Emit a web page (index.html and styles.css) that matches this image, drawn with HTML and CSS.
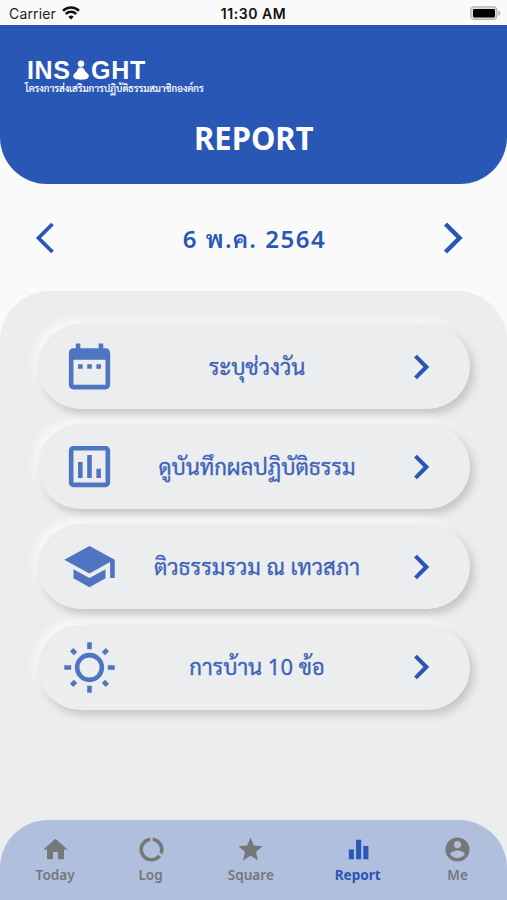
FILE: index.html
```html
<!DOCTYPE html>
<html lang="th">
<head>
<meta charset="utf-8">
<title>Report</title>
<link rel="stylesheet" href="styles.css">
</head>
<body>
<div class="app">
  <div class="status">
    <div class="carrier"><span>Carrier</span>
      <svg class="wifi" viewBox="0 0 18 14"><path d="M9 13.6 6.3 10.7a3.9 3.9 0 0 1 5.4 0z" fill="#111"/><path d="M3.8 8a7.4 7.4 0 0 1 10.4 0M1 4.9a11.4 11.4 0 0 1 16 0" fill="none" stroke="#111" stroke-width="2.5"/></svg>
    </div>
    <div class="clock">11:30 AM</div>
    <svg class="battery" viewBox="0 0 31 14"><rect x=".8" y=".8" width="26" height="12.6" rx="3.5" fill="#ddd" stroke="#b5b5b5" stroke-width="1.3"/><rect x="3" y="3" width="22" height="8.4" rx="1.3"/><path d="M28.3 4.4q2.2.8 2.2 2.7t-2.2 2.7z" fill="#b5b5b5"/></svg>
  </div>
  <header class="header">
    <div class="logo"><span class="logo-a">INS</span><svg class="figure" viewBox="0 0 16 20"><circle cx="8" cy="3.800" r="3.200"/><path d="M8 7.600c2.600 0 3.400 1.600 4.200 3.600l2.800 2.800c1.500 1.700.8 4-1 4.800-2.800 1.200-9.200 1.200-12 0-1.800-.8-2.500-3.100-1-4.800l2.800-2.800c.8-2 1.600-3.600 4.200-3.600z"/></svg><span class="logo-b">GHT</span></div>
    <div class="tagline"><span>โครงการส่งเสริมการปฏิบัติธรรมสมาชิกองค์กร</span></div>
    <h1 class="title"><span>REPORT</span></h1>
  </header>
  <div class="dates">
    <svg class="arrow" viewBox="0 0 20 32"><path d="M17.500 2 3.500 16l14 14" stroke-width="3.700"/></svg>
    <div class="date"><span>6 พ.ค. 2564</span></div>
    <svg class="arrow" viewBox="0 0 20 32"><path d="m2.500 2 14 14-14 14" stroke-width="4.500"/></svg>
  </div>
  <main class="panel">
    <div class="card">
      <svg class="icon" viewBox="0 0 24 24"><path d="M9 11H7v2h2v-2zm4 0h-2v2h2v-2zm4 0h-2v2h2v-2zm2-7h-1V2h-2v2H8V2H6v2H5c-1.110 0-1.990.9-1.990 2L3 20c0 1.100.89 2 2 2h14c1.100 0 2-.9 2-2V6c0-1.100-.9-2-2-2zm0 16H5V9h14v11z"/></svg>
      <div class="label"><span>ระบุช่วงวัน</span></div>
      <svg class="go" viewBox="0 0 16 26"><path d="m2.500 2.200 10.800 10.800L2.500 23.800"/></svg>
    </div>
    <div class="card">
      <svg class="icon" viewBox="0 0 24 24"><path d="M9 17H7v-7h2v7zm4 0h-2V7h2v10zm4 0h-2v-4h2v4zm2 2H5V5h14v14zm0-16H5c-1.100 0-2 .9-2 2v14c0 1.100.9 2 2 2h14c1.100 0 2-.9 2-2V5c0-1.100-.9-2-2-2z"/></svg>
      <div class="label"><span>ดูบันทึกผลปฏิบัติธรรม</span></div>
      <svg class="go" viewBox="0 0 16 26"><path d="m2.500 2.200 10.800 10.800L2.500 23.800"/></svg>
    </div>
    <div class="card">
      <svg class="icon" viewBox="0 0 24 24"><path d="M5 13.180v4L12 21l7-3.820v-4L12 17l-7-3.820zM12 3 1 9l11 6 9-4.910V17h2V9L12 3z"/></svg>
      <div class="label"><span>ติวธรรมรวม ณ เทวสภา</span></div>
      <svg class="go" viewBox="0 0 16 26"><path d="m2.500 2.200 10.800 10.800L2.500 23.800"/></svg>
    </div>
    <div class="card">
      <svg class="icon sun" viewBox="0 0 24 24"><circle cx="12" cy="12" r="5.400"/><path d="M12 1v3M12 20v3M1 12h3M20 12h3M4.200 4.200l1.700 1.700M18.100 18.100l1.700 1.700M4.200 19.800l1.700-1.700M18.100 5.900l1.700-1.700"/></svg>
      <div class="label"><span>การบ้าน 10 ข้อ</span></div>
      <svg class="go" viewBox="0 0 16 26"><path d="m2.500 2.200 10.800 10.800L2.500 23.800"/></svg>
    </div>
  </main>
  <nav class="tabs">
    <div class="tab"><svg viewBox="0 0 24 24"><path d="M10 20v-6h4v6h5v-8h3L12 3 2 12h3v8z"/></svg><span>Today</span></div>
    <div class="tab"><svg viewBox="0 0 24 24"><path d="M13 2.050v3.030c3.390.490 6 3.390 6 6.920 0 .9-.180 1.750-.480 2.540l2.600 1.530c.560-1.240.880-2.620.880-4.070 0-5.180-3.950-9.450-9-9.950zM12 19c-3.870 0-7-3.130-7-7 0-3.530 2.610-6.430 6-6.920V2.050c-5.060.5-9 4.760-9 9.950 0 5.520 4.470 10 9.990 10 3.310 0 6.240-1.610 8.060-4.090l-2.600-1.530C16.170 17.980 14.210 19 12 19z"/></svg><span>Log</span></div>
    <div class="tab"><svg viewBox="0 0 24 24"><path d="M12 17.270 18.180 21l-1.640-7.030L22 9.240l-7.190-.610L12 2 9.190 8.630 2 9.240l5.460 4.730L5.820 21z"/></svg><span>Square</span></div>
    <div class="tab active"><svg viewBox="0 0 24 24"><path d="M4 12h4.200v8H4zM10 4h4.200v16H10zM16 9h4.200v11H16z"/></svg><span>Report</span></div>
    <div class="tab"><svg viewBox="0 0 24 24"><path d="M12 2C6.480 2 2 6.480 2 12s4.480 10 10 10 10-4.480 10-10S17.520 2 12 2zm0 3c1.660 0 3 1.340 3 3s-1.340 3-3 3-3-1.340-3-3 1.340-3 3-3zm0 14.200c-2.500 0-4.710-1.280-6-3.220.030-1.990 4-3.080 6-3.080 1.990 0 5.970 1.090 6 3.080-1.290 1.940-3.500 3.220-6 3.220z"/></svg><span>Me</span></div>
  </nav>
</div>
</body>
</html>
```
FILE: styles.css
```css
* { box-sizing: border-box; }
body {
  margin: 0;
  background: #fafafa;
  font-family: "Noto Sans", Sarabun, "Noto Sans Thai Looped", "Noto Looped Thai", Loma, Garuda, Waree, "Noto Serif Thai", sans-serif;
}
svg { display: block; flex: none; }
span { display: inline-block; white-space: nowrap; }
.app {
  width: 507px;
  height: 900px;
  display: flex;
  flex-direction: column;
  background: #fafafa;
  overflow: hidden;
}
.status {
  height: 25px;
  flex: none;
  display: grid;
  grid-template-columns: 1fr auto 1fr;
  align-items: center;
  padding: 1px 6px 0 9px;
  font-family: Inter, sans-serif;
  color: #222;
}
.carrier { display: flex; align-items: center; gap: 6px; font-size: 14px; letter-spacing: 0.15px; }
.wifi { width: 18px; height: 14px; }
.clock { font-size: 14px; font-weight: 600; color: #111; letter-spacing: 0.55px; margin-left: -3px; }
.battery { width: 31px; height: 14px; justify-self: end; }
.header {
  height: 159px;
  flex: none;
  background: #2857b5;
  border-radius: 0 0 47px 47px;
  color: #fff;
  padding: 34px 0 0 26px;
}
.logo {
  display: flex;
  align-items: center;
  height: 22px;
  font: bold 25px/22px "Liberation Sans", sans-serif;
}
.logo-a { width: 47px; letter-spacing: 0.6px; padding-left: 1px; }
.logo-b { letter-spacing: 0.8px; }
.figure { width: 16px; height: 20px; margin: 0 2px 0 0; fill: #fff; }
.tagline { height: 14px; font-size: 9.8px; line-height: 14px; margin: 1px 0 0 -1px; -webkit-text-stroke: 0.2px #fff; }
.title {
  margin: 21px 0 0 -26px;
  text-align: center;
  font-size: 32px;
  line-height: 42px;
  font-weight: 700;
}
.title span { transform: scaleX(0.967); }
.dates {
  height: 107px;
  flex: none;
  display: grid;
  grid-template-columns: 20px 1fr 20px;
  align-items: center;
  padding: 0 44px 0 35px;
}
.arrow { width: 20px; height: 32px; fill: none; stroke: #2857b5; }
.date { padding: 2px 0 0 11px; text-align: center; font-size: 24px; font-weight: 600; color: #2857b5; letter-spacing: 1.5px; }
.panel {
  flex: 1;
  background: #ebedee;
  border-radius: 50px 50px 0 0;
  padding: 33px 37px 0 38px;
  display: flex;
  flex-direction: column;
  gap: 15.2px;
  margin-bottom: -80px;
}
.card {
  height: 85px;
  flex: none;
  border-radius: 43px;
  background: #ebedee;
  box-shadow: 4px 5px 9px #c4c6c6, -4px -5px 8px #f9f9f9;
  display: grid;
  grid-template-columns: 55px 1fr 16px;
  align-items: center;
  padding: 0 41px 0 24px;
}
.icon { width: 55px; height: 55px; fill: #4f74c1; }
.sun { fill: none; stroke: #4f74c1; stroke-width: 2; }
.label {
  padding: 0 16px 2px 0;
  text-align: center;
  font-size: 22px;
  color: #3c62b8;
  -webkit-text-stroke: 0.3px #3c62b8;
}
.go { width: 16px; height: 26px; fill: none; stroke: #2857b5; stroke-width: 4; }
.tabs {
  height: 80px;
  flex: none;
  position: relative;
  background: #b1bfde;
  border-radius: 48px 48px 0 0;
  display: grid;
  grid-template-columns: 110px 82px 117px 98px 101px;
  padding-top: 15px;
}
.tab {
  display: flex;
  flex-direction: column;
  align-items: center;
  color: #757778;
  font-size: 14px;
  font-weight: 600;
  line-height: 20px;
  gap: 5px;
}
.tab svg { width: 29px; height: 29px; fill: currentColor; margin-bottom: -4px; }
.tab span { transform: scaleX(0.97); }
.active { color: #2857b5; font-weight: 700; }
```
